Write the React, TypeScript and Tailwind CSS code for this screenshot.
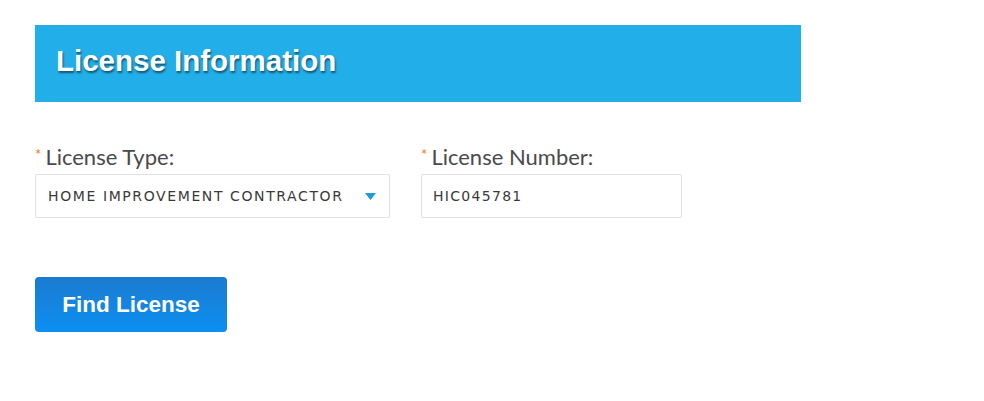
const App = () => {
  return (
    <div className="min-h-[401px] w-[984px] bg-white px-[35px] pt-[25px]">
      <div className="flex h-[77px] w-[766px] items-center bg-[#22aee8] pb-[4px] pl-[21px]">
        <h1 className="font-['Liberation_Sans',Arial,sans-serif] text-[29.5px] font-bold text-white [text-shadow:1px_2px_2px_rgba(0,0,0,0.5)]">
          License Information
        </h1>
      </div>

      <div className="mt-[42px] flex gap-[31px]">
        <div className="flex w-[355px] flex-col">
          <label className="flex items-center font-['Lato',sans-serif] text-[22px] leading-[26px] text-[#4a4a4a]">
            <span className="mr-[4px] -mt-[7px] text-[15px] leading-[16px] text-[#e8772a]">*</span>
            License Type:
          </label>
          <div className="mt-[4px] flex h-[44px] items-center justify-between rounded-[2px] border border-[#e2e2e2] pl-[12px] pr-[12px]">
            <span className="font-['DejaVu_Sans',Verdana,sans-serif] text-[14px] tracking-[1.6px] text-[#3a3a3a]">
              HOME IMPROVEMENT CONTRACTOR
            </span>
            <svg width="11" height="7" viewBox="0 0 11 7" className="mr-[1px]">
              <path d="M0 0 L11 0 L5.5 7 Z" fill="#1e9ad6" />
            </svg>
          </div>
        </div>

        <div className="flex w-[261px] flex-col">
          <label className="flex items-center font-['Lato',sans-serif] text-[22px] leading-[26px] text-[#4a4a4a]">
            <span className="mr-[4px] -mt-[7px] text-[15px] leading-[16px] text-[#e8772a]">*</span>
            License Number:
          </label>
          <div className="mt-[4px] flex h-[44px] items-center rounded-[2px] border border-[#e2e2e2] pl-[11px]">
            <span className="font-['DejaVu_Sans',Verdana,sans-serif] text-[14px] tracking-[1.3px] text-[#3a3a3a]">HIC045781</span>
          </div>
        </div>
      </div>

      <button className="mt-[59px] flex h-[55px] w-[192px] items-center justify-center rounded-[4px] bg-gradient-to-b from-[#1a7bcf] to-[#0a8ff2] font-['Liberation_Sans',Arial,sans-serif] text-[22.5px] font-bold text-white">
        Find License
      </button>
    </div>
  );
};

export default App;
